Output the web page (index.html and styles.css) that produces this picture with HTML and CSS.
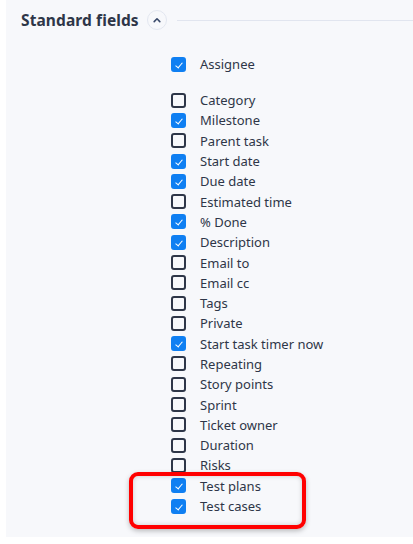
FILE: index.html
```html
<!DOCTYPE html>
<html>
<head>
<meta charset="utf-8">
<link rel="stylesheet" href="styles.css">
</head>
<body>
<div class="panel">
  <div class="header">
    <h2 class="title">Standard fields</h2>
    <span class="toggle"><svg width="8" height="6" viewBox="0 0 8 6"><path d="M1.2 4.6 L4 1.8 L6.8 4.6" fill="none" stroke="#3a4a6b" stroke-width="1.6" stroke-linecap="round" stroke-linejoin="round"/></svg></span>
    <span class="rule"></span>
  </div>
  <div class="list">
    <div class="row first"><span class="cb on"></span><span class="lbl">Assignee</span></div>
    <div class="row"><span class="cb"></span><span class="lbl">Category</span></div>
    <div class="row"><span class="cb on"></span><span class="lbl">Milestone</span></div>
    <div class="row"><span class="cb"></span><span class="lbl">Parent task</span></div>
    <div class="row"><span class="cb on"></span><span class="lbl">Start date</span></div>
    <div class="row"><span class="cb on"></span><span class="lbl">Due date</span></div>
    <div class="row"><span class="cb"></span><span class="lbl">Estimated time</span></div>
    <div class="row"><span class="cb on"></span><span class="lbl">% Done</span></div>
    <div class="row"><span class="cb on"></span><span class="lbl">Description</span></div>
    <div class="row"><span class="cb"></span><span class="lbl">Email to</span></div>
    <div class="row"><span class="cb"></span><span class="lbl">Email cc</span></div>
    <div class="row"><span class="cb"></span><span class="lbl">Tags</span></div>
    <div class="row"><span class="cb"></span><span class="lbl">Private</span></div>
    <div class="row"><span class="cb on"></span><span class="lbl">Start task timer now</span></div>
    <div class="row"><span class="cb"></span><span class="lbl">Repeating</span></div>
    <div class="row"><span class="cb"></span><span class="lbl">Story points</span></div>
    <div class="row"><span class="cb"></span><span class="lbl">Sprint</span></div>
    <div class="row"><span class="cb"></span><span class="lbl">Ticket owner</span></div>
    <div class="row"><span class="cb"></span><span class="lbl">Duration</span></div>
    <div class="row"><span class="cb"></span><span class="lbl">Risks</span></div>
    <div class="highlight-wrap">
      <div class="row"><span class="cb on"></span><span class="lbl">Test plans</span></div>
      <div class="row"><span class="cb on"></span><span class="lbl">Test cases</span></div>
      <div class="highlight"></div>
    </div>
  </div>
</div>
</body>
</html>
```
FILE: styles.css
```css
html, body {
  margin: 0;
  padding: 0;
  background: #ffffff;
}
body {
  padding-left: 6px;
  font-family: "Noto Sans", "Open Sans", sans-serif;
  color: #2e3648;
}
.panel {
  background: #f7f8fb;
  height: 537px;
  box-sizing: border-box;
  padding-top: 8px;
}
.header {
  display: flex;
  align-items: center;
  height: 24px;
  padding-left: 15px;
}
.title {
  margin: 0;
  font-size: 15.5px;
  font-weight: 700;
  color: #2e3648;
  letter-spacing: 0.1px;
  line-height: 24px;
}
.toggle {
  margin-left: 8px;
  width: 20px;
  height: 20px;
  box-sizing: border-box;
  border: 1px solid #e3e7f0;
  border-radius: 50%;
  display: flex;
  align-items: center;
  justify-content: center;
}
.rule {
  flex: 1;
  height: 1px;
  background: #e1e5ef;
  margin-left: 10px;
}
.list {
  padding-left: 165px;
  padding-top: 22px;
}
.row {
  display: flex;
  align-items: center;
  height: 20.3px;
}
.row.first {
  margin-bottom: 15.7px;
}
.cb {
  width: 15px;
  height: 15px;
  box-sizing: border-box;
  border: 2px solid #2e3648;
  border-radius: 3px;
  flex: none;
  position: relative;
}
.cb.on {
  background: #0f7ff2;
  border-color: #0f7ff2;
}
.cb.on::after {
  content: "";
  position: absolute;
  left: 3.5px;
  top: 2px;
  width: 3px;
  height: 6px;
  border-right: 1.6px solid #fff;
  border-bottom: 1.6px solid #fff;
  transform: rotate(40deg);
}
.lbl {
  margin-left: 14px;
  font-size: 13px;
  color: #2e3648;
  white-space: nowrap;
}
.highlight-wrap {
  position: relative;
}
.highlight {
  position: absolute;
  left: -42px;
  top: -4px;
  width: 177px;
  height: 57px;
  box-sizing: border-box;
  border: 4px solid #ff0000;
  border-radius: 9px;
  box-shadow: 0 2px 5px rgba(0,0,0,0.25), inset 0 0 5px rgba(0,0,0,0.18);
}
```
